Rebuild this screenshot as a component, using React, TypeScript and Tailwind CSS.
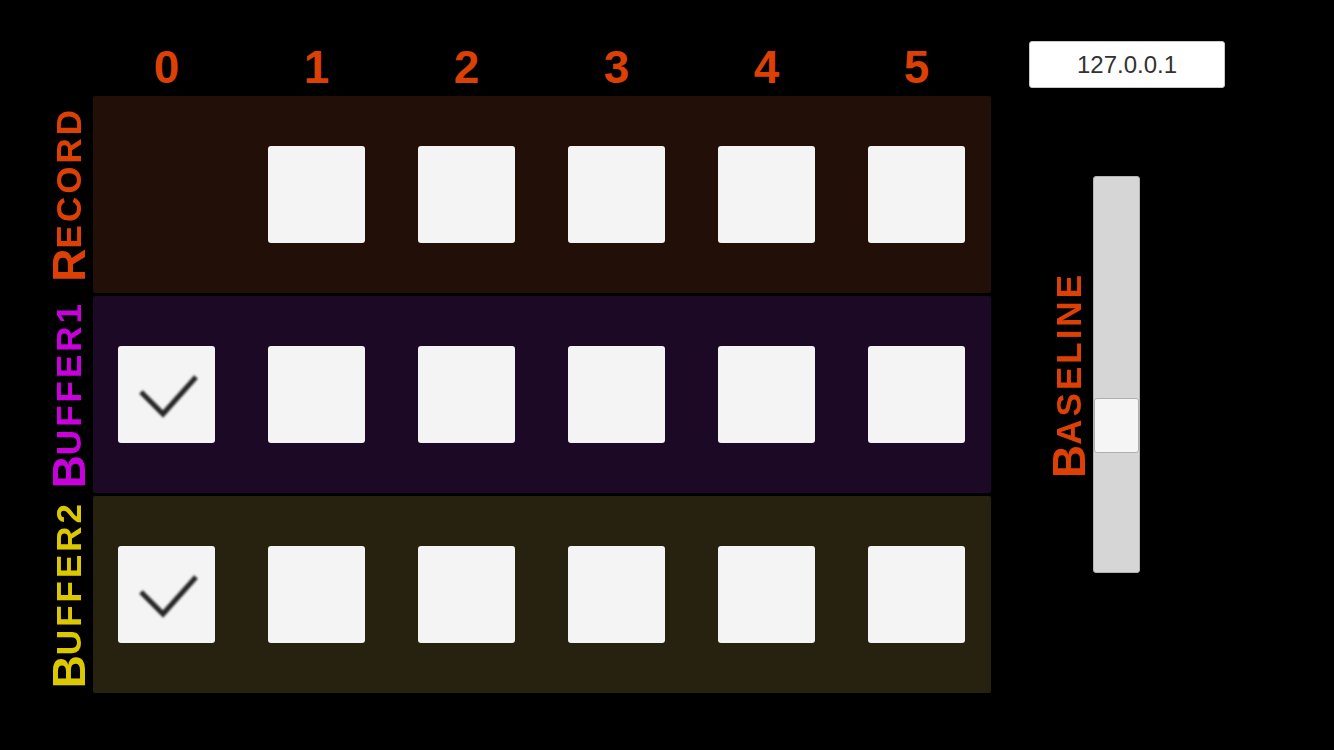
import React from "react";

const ORANGE = "text-[#dc4004]";

function SmallCaps({ big, rest, color }: { big: string; rest: string; color: string }) {
  return (
    <div
      className={`w-[46px] text-[46px] leading-[46px] font-bold whitespace-nowrap [writing-mode:vertical-rl] rotate-180 ${color}`}
      style={{ fontFamily: '"Liberation Sans", Arial, sans-serif' }}
    >
      <span className="mr-[1px]">{big}</span>
      <span className="text-[35px] tracking-[3px]">{rest}</span>
    </div>
  );
}

function Box({ checked }: { checked?: boolean }) {
  return (
    <div className="w-[97px] h-[97px] shrink-0 rounded-[3px] bg-[#f4f4f4] flex items-center justify-center">
      {checked && (
        <svg width="97" height="97" viewBox="0 0 97 97">
          <defs>
            <filter id="bl" x="-20%" y="-20%" width="140%" height="140%">
              <feGaussianBlur stdDeviation="1.1" />
            </filter>
          </defs>
          <polyline
            points="23,46 45,68 78,31"
            fill="none"
            stroke="#262626"
            strokeWidth="5"
            strokeLinejoin="miter"
            filter="url(#bl)"
          />
        </svg>
      )}
    </div>
  );
}

function Row({ bg, first, firstChecked }: { bg: string; first: boolean; firstChecked?: boolean }) {
  return (
    <div className={`h-[197px] rounded-[2px] ${bg} flex items-center pl-[25px] gap-[53px]`}>
      {first ? <Box checked={firstChecked} /> : <div className="w-[97px] h-[97px] shrink-0" />}
      {[1, 2, 3, 4, 5].map((i) => (
        <Box key={i} />
      ))}
    </div>
  );
}

export default function App() {
  return (
    <div
      className="w-[1334px] h-[750px] bg-black flex"
      style={{ fontFamily: '"Liberation Sans", Arial, sans-serif' }}
    >
      {/* label column */}
      <div className="w-[93px] shrink-0 flex flex-col pt-[96px] gap-[3px]">
        <div className="h-[197px] flex items-center pl-[46px]">
          <SmallCaps big="R" rest="ECORD" color={ORANGE} />
        </div>
        <div className="h-[197px] flex items-center pl-[46px]">
          <SmallCaps big="B" rest="UFFER1" color="text-[#c800dc]" />
        </div>
        <div className="h-[197px] flex items-center pl-[46px]">
          <SmallCaps big="B" rest="UFFER2" color="text-[#dcc800]" />
        </div>
      </div>

      {/* grid */}
      <div className="w-[898px] shrink-0 flex flex-col">
        <div className="h-[96px] pt-[44px] pl-[25px] flex gap-[53px]">
          {[0, 1, 2, 3, 4, 5].map((n) => (
            <div key={n} className={`w-[97px] text-center text-[46px] leading-[46px] font-bold ${ORANGE}`}>
              {n}
            </div>
          ))}
        </div>
        <div className="flex flex-col gap-[3px]">
          <Row bg="bg-[#221008]" first={false} />
          <Row bg="bg-[#1c0926]" first firstChecked />
          <Row bg="bg-[#27220f]" first firstChecked />
        </div>
      </div>

      {/* right column */}
      <div className="pl-[38px] pt-[41px] flex flex-col">
        <div className="w-[196px] h-[47px] rounded-[3px] bg-white border border-[#c8c8c8] flex items-center justify-center text-[24px] text-[#323232]">
          127.0.0.1
        </div>
        <div className="mt-[88px] ml-[17px] flex items-center gap-[1px]">
          <SmallCaps big="B" rest="ASELINE" color={ORANGE} />
          <div className="relative w-[47px] h-[397px] rounded-[3px] bg-[#d6d6d6] border border-[#b4b4b4]">
            <div className="absolute left-0 right-0 top-[221px] h-[55px] rounded-[3px] bg-[#f5f5f5] border border-[#b0b0b0]" />
          </div>
        </div>
      </div>
    </div>
  );
}
